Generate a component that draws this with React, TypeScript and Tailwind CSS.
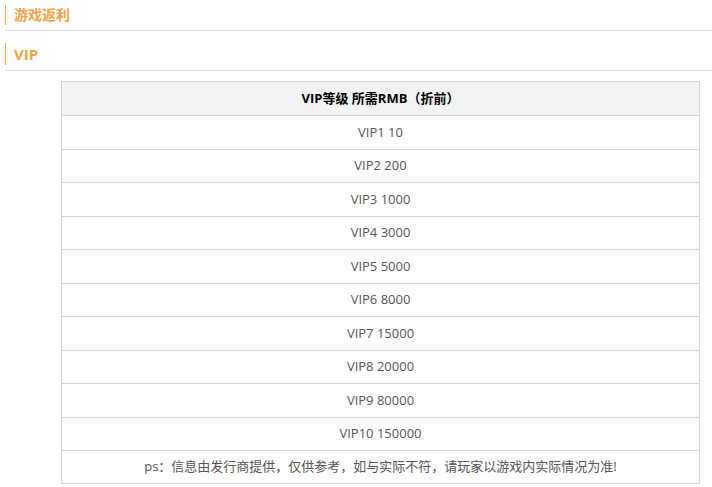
import React from "react";

const rows = [
  "VIP1 10",
  "VIP2 200",
  "VIP3 1000",
  "VIP4 3000",
  "VIP5 5000",
  "VIP6 8000",
  "VIP7 15000",
  "VIP8 20000",
  "VIP9 80000",
  "VIP10 150000",
];

const App = () => {
  return (
    <div
      className="w-[712px] h-[487px] overflow-hidden bg-white"
      style={{ fontFamily: '"Open Sans", "Noto Sans CJK SC", sans-serif' }}
    >
      {/* 游戏返利 */}
      <div className="ml-[5px] border-b border-[#e0e0e0] pt-[5px] pb-[5px]">
        <div className="flex h-[20px] items-center border-l border-[#f5a14a] pl-[8px]">
          <span className="text-[14px] font-bold leading-[20px] text-[#f5a14a]">游戏返利</span>
        </div>
      </div>
      {/* VIP */}
      <div className="ml-[5px] mt-[12px] border-b border-[#e0e0e0] pb-[5px]">
        <div className="flex h-[22px] items-center border-l border-[#f5a14a] pl-[8px]">
          <span className="text-[15px] font-bold leading-[22px] text-[#f5a14a]">VIP</span>
        </div>
      </div>
      <table className="mt-[10px] ml-[61px] w-[639px] border-collapse text-[13px]">
        <thead>
          <tr>
            <th className="h-[34px] border border-[#d4d4d4] bg-[#f2f3f5] font-bold text-black">
              VIP等级 所需RMB（折前）
            </th>
          </tr>
        </thead>
        <tbody>
          {rows.map((r) => (
            <tr key={r}>
              <td className="h-[33.5px] border border-[#d4d4d4] text-center text-[#555]">{r}</td>
            </tr>
          ))}
          <tr>
            <td className="h-[33px] border border-[#d4d4d4] text-center text-[#555]">
              ps：信息由发行商提供，仅供参考，如与实际不符，请玩家以游戏内实际情况为准!
            </td>
          </tr>
        </tbody>
      </table>
    </div>
  );
};

export default App;
